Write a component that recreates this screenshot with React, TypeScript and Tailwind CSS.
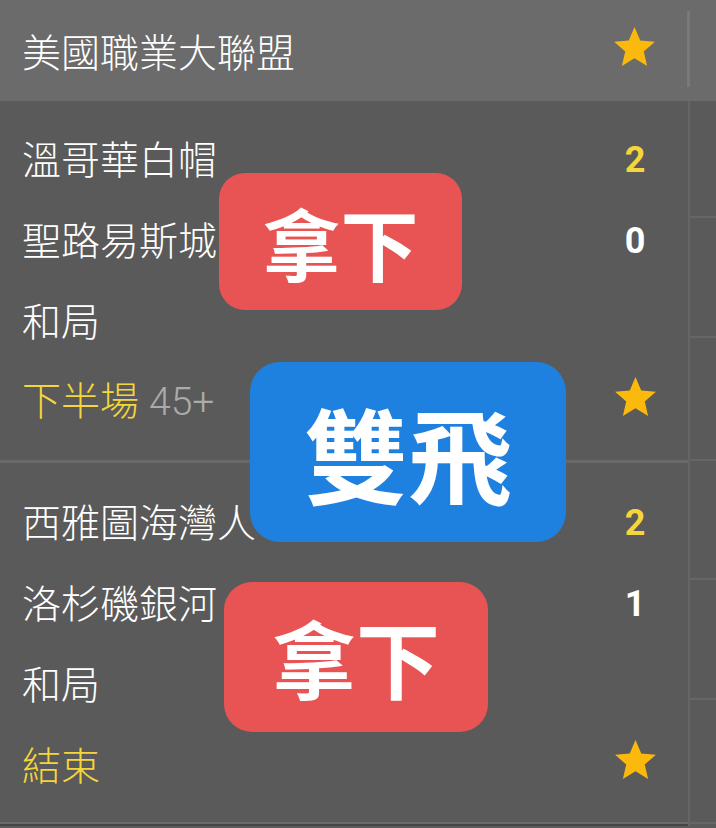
import React from 'react';

type Row = { label: React.ReactNode; right?: React.ReactNode };

const cjk = { fontFamily: '"Noto Sans CJK TC", "Noto Sans", sans-serif' };
const num = { fontFamily: 'Roboto, "Liberation Sans", sans-serif' };

const Star: React.FC<{ size?: number }> = ({ size = 49 }) => (
  <svg width={size} height={size} viewBox="0 0 24 24" className="-mt-[6px]">
    <path
      fill="#fbb80d"
      d="M12 17.27L18.18 21l-1.64-7.03L22 9.24l-7.19-.61L12 2 9.19 8.63 2 9.24l5.46 4.73L5.82 21z"
    />
  </svg>
);

const Score: React.FC<{ value: number; yellow?: boolean }> = ({ value, yellow }) => (
  <span
    className={`mt-[4px] text-[36px] font-bold leading-none ${yellow ? 'text-[#f5d53c]' : 'text-white'}`}
    style={num}
  >
    {value}
  </span>
);

const matches: Row[][] = [
  [
    { label: '溫哥華白帽', right: <Score value={2} yellow /> },
    { label: '聖路易斯城', right: <Score value={0} /> },
    { label: '和局' },
    {
      label: (
        <>
          <span className="text-[#f5d53c]">下半場</span>
          <span className="ml-[10px] text-[#ababab]" style={num}>
            45+
          </span>
        </>
      ),
      right: <Star />,
    },
  ],
  [
    { label: '西雅圖海灣人', right: <Score value={2} yellow /> },
    { label: '洛杉磯銀河', right: <Score value={1} /> },
    { label: '和局' },
    { label: <span className="text-[#f5d53c]">結束</span>, right: <Star /> },
  ],
];

const stripRows = [117, 120, 123, 119, 120, 124];

const Badge: React.FC<{ text: string; className: string; textSize: string }> = ({
  text,
  className,
  textSize,
}) => (
  <div className={`absolute flex items-center justify-center text-white leading-none ${className}`}>
    <span className={textSize} style={cjk}>
      {text}
    </span>
  </div>
);

export default function App() {
  return (
    <div className="relative w-[716px] h-[828px] overflow-hidden bg-[#5a5a5a]" style={cjk}>
      {/* header */}
      <div className="flex h-[101px] bg-[#6b6b6b]">
        <div className="flex w-[687px] items-center pl-[22px]">
          <span className="flex-1 text-[39px] font-light leading-none text-white">美國職業大聯盟</span>
          <div className="flex w-[72px] items-center justify-center mr-[17px]">
            <Star />
          </div>
        </div>
        <div className="flex-1 pt-[11px] pb-[14px]">
          <div className="h-full w-[3px] bg-[#797979]" />
        </div>
      </div>

      {/* body */}
      <div className="flex">
        <div className="w-[688px]">
          {matches.map((group, gi) => (
            <div
              key={gi}
              className={`pl-[22px] ${gi === 0 ? 'pt-[16px] pb-[19px] border-b-[3px] border-[#696969]' : 'pt-[17px] pb-[18px] border-b-[2px] border-[#6b6b6b]'}`}
            >
              {group.map((row, ri) => (
                <div key={ri} className="flex h-[81px] items-center">
                  <div className="flex-1 text-[39px] font-light leading-none text-white">{row.label}</div>
                  <div className="flex w-[72px] items-center justify-center mr-[17px]">{row.right}</div>
                </div>
              ))}
            </div>
          ))}
          <div className="h-[2px] bg-[#454545]" />
        </div>
        <div className="w-[28px] border-l-[2px] border-[#656565]">
          {stripRows.map((h, i) => (
            <div key={i} className="border-b-[2px] border-[#666666]" style={{ height: h }} />
          ))}
        </div>
      </div>

      {/* overlays */}
      <Badge
        text="拿下"
        className="left-[219px] top-[173px] w-[243px] h-[137px] rounded-[26px] bg-[#e85454] font-semibold"
        textSize="text-[78px]"
      />
      <Badge
        text="雙飛"
        className="left-[250px] top-[362px] w-[316px] h-[180px] rounded-[30px] bg-[#1f81df] font-bold"
        textSize="text-[104px]"
      />
      <Badge
        text="拿下"
        className="left-[224px] top-[582px] w-[264px] h-[150px] rounded-[28px] bg-[#e85454] font-semibold"
        textSize="text-[84px]"
      />
    </div>
  );
}
